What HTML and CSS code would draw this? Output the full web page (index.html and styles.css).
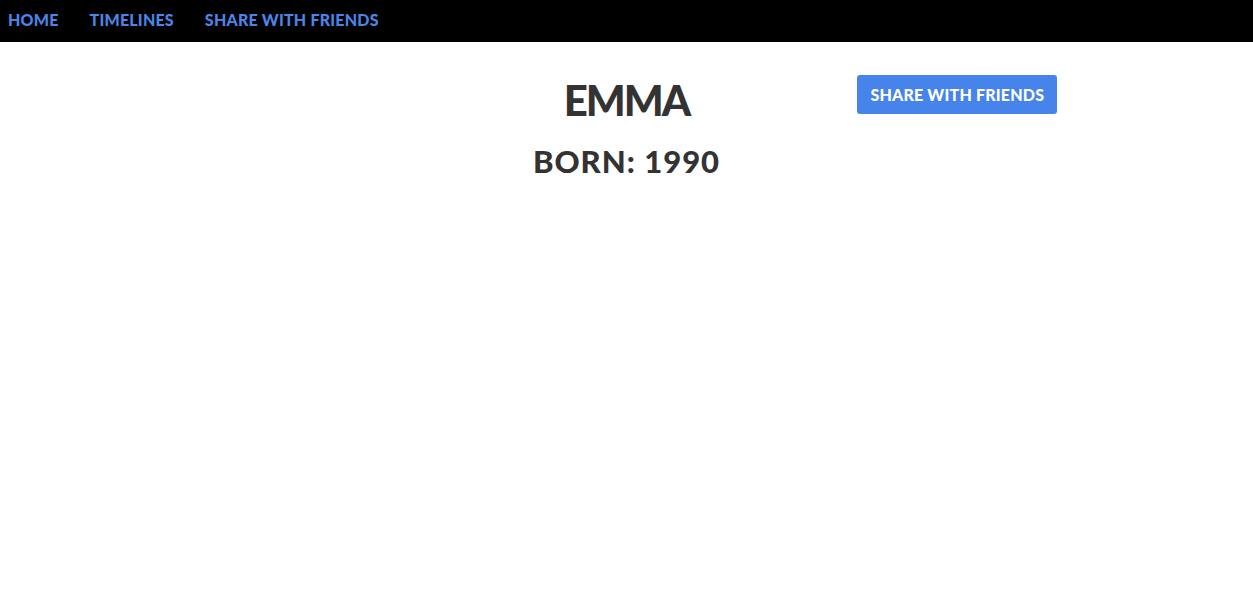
FILE: index.html
```html
<!DOCTYPE html>
<html>
<head>
<meta charset="utf-8">
<link rel="stylesheet" href="styles.css">
</head>
<body>
<nav class="topnav">
  <a href="#" class="nav-link">HOME</a>
  <a href="#" class="nav-link">TIMELINES</a>
  <a href="#" class="nav-link">SHARE WITH FRIENDS</a>
</nav>
<main class="profile">
  <div class="profile-side"></div>
  <div class="profile-main">
    <h1 class="name">EMMA</h1>
    <h2 class="born">BORN: 1990</h2>
  </div>
  <div class="profile-side profile-actions">
    <button class="share-btn">SHARE WITH FRIENDS</button>
  </div>
</main>
</body>
</html>
```
FILE: styles.css
```css
html, body {
  margin: 0;
  padding: 0;
  background: #fff;
  font-family: Lato, "Open Sans", sans-serif;
}
.topnav {
  display: flex;
  align-items: center;
  height: 42px;
  box-sizing: border-box;
  padding: 0 0 3px 8px;
  background: #000;
  gap: 31px;
}
.nav-link {
  color: #4a86e8;
  text-decoration: none;
  font-weight: 900;
  font-size: 16px;
  letter-spacing: 0.2px;
}
.profile {
  display: grid;
  grid-template-columns: 1fr 1fr 1fr;
}
.profile-main {
  text-align: center;
  color: #333;
}
.name {
  margin: 33px 0 0;
  font-size: 42px;
  font-weight: 900;
  line-height: 1.2;
  letter-spacing: -2px;
}
.born {
  margin: 18px 0 0;
  font-size: 31px;
  font-weight: 900;
  line-height: 1.2;
  letter-spacing: 1px;
}
.profile-actions {
  padding: 33px 0 0 22px;
}
.share-btn {
  width: 200px;
  height: 39px;
  background: #4683ea;
  color: #fff;
  border: none;
  border-radius: 3px;
  font-family: inherit;
  font-weight: 900;
  font-size: 16px;
  letter-spacing: 0.2px;
  padding: 0;
}
```
